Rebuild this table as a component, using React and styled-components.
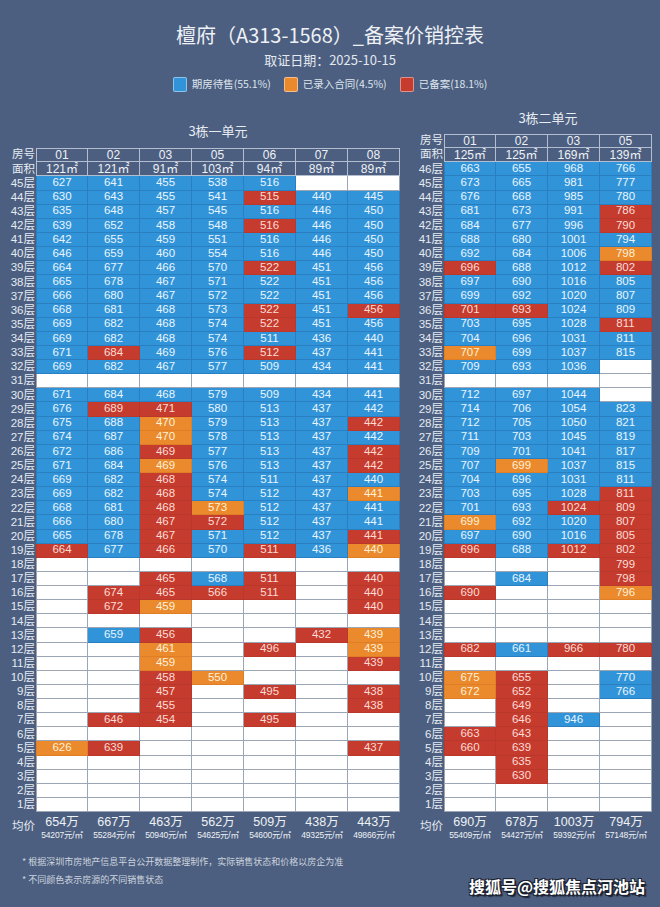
import React from "react";
import styled, { createGlobalStyle } from "styled-components";

const ROW_H = 14.13;
const NUM_FONT = `"Liberation Sans", "Noto Sans CJK SC", sans-serif`;

const COLORS = {
  b: { fill: "#3294d8", line: "#2a7fc0", text: "#e8f4ff" },
  r: { fill: "#c53b2e", line: "#b9372b", text: "#fbdcd5" },
  o: { fill: "#ea8a2d", line: "#de7f27", text: "#fff0d8" },
  e: { fill: "#ffffff", line: "#9ba5b3", text: "#333" },
  h: { fill: "transparent", line: "#b3bfd1", text: "#eef1f6" },
};

const GlobalStyle = createGlobalStyle`
  html, body {
    margin: 0;
    padding: 0;
    background: #4c5f80;
  }
  body {
    font-family: "Noto Sans CJK SC", "Noto Sans", sans-serif;
  }
`;

const Page = styled.div`
  width: 660px;
  height: 907px;
  box-sizing: border-box;
  padding: 22px 8px 0;
  background: #4c5f80;
  color: #e8ecf2;
  overflow: hidden;
`;

const Title = styled.h1`
  margin: 0;
  text-align: center;
  font-size: 20px;
  line-height: 26px;
  font-weight: 400;
  color: #eef1f5;
`;

const DateLine = styled.div`
  margin-top: 3px;
  text-align: center;
  font-size: 13px;
  line-height: 18px;
  color: #e3e8ef;
`;

const Legend = styled.div`
  margin-top: 7px;
  height: 16px;
  display: flex;
  justify-content: center;
  align-items: center;
  gap: 13px;
`;

const LegendItem = styled.div`
  display: flex;
  align-items: center;
  gap: 5px;
  font-size: 10.5px;
  line-height: 16px;
  color: #dfe5ee;
`;

const Swatch = styled.span`
  width: 14px;
  height: 15px;
  box-sizing: border-box;
  border-radius: 2px;
  background: ${(p) => COLORS[p.$status].fill};
  border: 1px solid rgba(255, 255, 255, 0.45);
`;

const Tables = styled.div`
  margin-top: 18px;
  display: flex;
  align-items: flex-end;
  gap: 15px;
`;

const Block = styled.div`
  display: flex;
  flex-direction: column;
`;

const BlockTitle = styled.div`
  padding-left: ${(p) => p.$offset}px;
  margin-bottom: ${(p) => p.$gap}px;
  text-align: center;
  font-size: 13px;
  line-height: 16px;
  color: #e8ecf2;
`;

const Grid = styled.div`
  display: grid;
  grid-template-columns: ${(p) => p.$label}px repeat(${(p) => p.$cols}, 52px);
  grid-template-rows: repeat(${(p) => p.$rows}, ${ROW_H}px) 30px;
  font-family: ${NUM_FONT};
`;

const RowLabel = styled.div`
  display: flex;
  align-items: center;
  justify-content: flex-end;
  padding-right: 1px;
  font-size: 11.5px;
  line-height: 1;
  color: #e6ebf2;
  white-space: nowrap;
`;

const Cell = styled.div`
  box-sizing: border-box;
  display: flex;
  align-items: center;
  justify-content: center;
  background: ${(p) => COLORS[p.$status].fill};
  color: ${(p) => COLORS[p.$status].text};
  border-right: 1px solid ${(p) => COLORS[p.$status].line};
  border-bottom: 1px solid ${(p) => COLORS[p.$status].line};
  border-left: ${(p) => (p.$first ? `1px solid ${COLORS[p.$status].line}` : "none")};
  border-top: ${(p) => (p.$top ? `1px solid ${COLORS[p.$status].line}` : "none")};
  font-size: ${(p) => (p.$status === "h" ? 12 : 11.5)}px;
  line-height: 1;
  white-space: nowrap;
`;

const AvgLabel = styled.div`
  display: flex;
  align-items: center;
  justify-content: flex-end;
  padding-right: 1px;
  font-size: 11.5px;
  line-height: 1;
  color: #e6ebf2;
`;

const AvgCell = styled.div`
  display: flex;
  flex-direction: column;
  align-items: center;
  padding-top: 3px;
  gap: 1px;
  color: #eef1f5;
  white-space: nowrap;
`;

const AvgTotal = styled.span`
  font-size: 12.5px;
  line-height: 14px;
`;

const AvgUnit = styled.span`
  font-size: 8.5px;
  line-height: 10px;
  letter-spacing: -0.2px;
`;

const Footer = styled.div`
  margin-top: 11px;
  padding: 0 7px 0 14px;
  display: flex;
  justify-content: space-between;
  align-items: flex-start;
`;

const Notes = styled.div`
  font-size: 9px;
  line-height: 18px;
  color: #cdd4de;
`;

const Watermark = styled.div`
  margin-top: 23px;
  font-size: 16px;
  line-height: 20px;
  font-weight: 700;
  color: #ffffff;
  text-shadow: 1px 1px 0 #1c2230, -1px -1px 0 #1c2230, 1px -1px 0 #1c2230,
    -1px 1px 0 #1c2230, 2px 2px 1px #1c2230;
`;

const LEFT = {
  name: "3栋一单元",
  rooms: ["01", "02", "03", "05", "06", "07", "08"],
  areas: ["121", "121", "91", "103", "94", "89", "89"],
  top: 45,
  rows: {
    45: "627 641 455 538 516 - -",
    44: "630 643 455 541 515r 440 445",
    43: "635 648 457 545 516 446 450",
    42: "639 652 458 548 516r 446 450",
    41: "642 655 459 551 516 446 450",
    40: "646 659 460 554 516 446 450",
    39: "664 677 466 570 522r 451 456",
    38: "665 678 467 571 522 451 456",
    37: "666 680 467 572 522 451 456",
    36: "668 681 468 573 522r 451 456r",
    35: "669 682 468 574 522r 451 456",
    34: "669 682 468 574 511 436 440",
    33: "671 684r 469 576 512r 437 441",
    32: "669 682 467 577 509 434 441",
    30: "671 684 468 579 509 434 441",
    29: "676 689r 471r 580 513 437 442",
    28: "675 688 470o 579 513 437 442r",
    27: "674 687 470o 578 513 437 442",
    26: "672 686 469r 577 513 437 442r",
    25: "671 684 469o 576 513 437 442r",
    24: "669 682 468r 574 511 437 440",
    23: "669 682 468r 574 512 437 441o",
    22: "668 681 468r 573o 512 437 441",
    21: "666 680 467r 572r 512 437 441",
    20: "665 678 467r 571 512 437 441r",
    19: "664r 677 466r 570 511r 436 440o",
    17: "- - 465r 568 511r - 440r",
    16: "- 674r 465r 566r 511r - 440r",
    15: "- 672r 459o - - - 440r",
    13: "- 659 456r - - 432r 439o",
    12: "- - 461o - 496r - 439o",
    11: "- - 459o - - - 439r",
    10: "- - 458r 550o - - -",
    9: "- - 457r - 495r - 438r",
    8: "- - 455r - - - 438r",
    7: "- 646r 454r - 495r - -",
    5: "626o 639r - - - - 437r",
  },
  avg: [
    ["654", "54207"],
    ["667", "55284"],
    ["463", "50940"],
    ["562", "54625"],
    ["509", "54600"],
    ["438", "49325"],
    ["443", "49866"],
  ],
};

const RIGHT = {
  name: "3栋二单元",
  rooms: ["01", "02", "03", "05"],
  areas: ["125", "125", "169", "139"],
  top: 46,
  rows: {
    46: "663 655 968 766",
    45: "673 665 981 777",
    44: "676 668 985 780",
    43: "681 673 991 786r",
    42: "684 677 996 790r",
    41: "688 680 1001 794",
    40: "692 684 1006 798o",
    39: "696r 688 1012 802r",
    38: "697 690 1016 805",
    37: "699 692 1020 807",
    36: "701r 693r 1024 809",
    35: "703 695 1028 811r",
    34: "704 696 1031 811",
    33: "707o 699 1037 815",
    32: "709 693 1036 -",
    30: "712 697 1044 -",
    29: "714 706 1054 823",
    28: "712 705 1050 821",
    27: "711 703 1045 819",
    26: "709 701 1041 817",
    25: "707 699o 1037 815",
    24: "704 696 1031 811",
    23: "703 695 1028 811r",
    22: "701 693 1024r 809r",
    21: "699o 692 1020 807r",
    20: "697 690 1016 805r",
    19: "696r 688 1012r 802r",
    18: "- - - 799r",
    17: "- 684 - 798r",
    16: "690r - - 796o",
    12: "682r 661 966r 780r",
    10: "675o 655r - 770",
    9: "672o 652r - 766",
    8: "- 649r - -",
    7: "- 646r 946 -",
    6: "663r 643r - -",
    5: "660r 639r - -",
    4: "- 635r - -",
    3: "- 630r - -",
  },
  avg: [
    ["690", "55409"],
    ["678", "54427"],
    ["1003", "59392"],
    ["794", "57148"],
  ],
};

// "512r" -> red, "470o" -> orange, "-" -> empty, plain number -> blue
const parseCell = (token) => {
  if (!token || token === "-") return { value: "", status: "e" };
  const last = token.slice(-1);
  if (last === "r" || last === "o") return { value: token.slice(0, -1), status: last };
  return { value: token, status: "b" };
};

const UnitTable = ({ data, label, titleGap }) => {
  const cols = data.rooms.length;
  const floors = [];
  for (let f = data.top; f >= 1; f--) floors.push(f);

  return (
    <Block>
      <BlockTitle $offset={label} $gap={titleGap}>
        {data.name}
      </BlockTitle>
      <Grid $label={label} $cols={cols} $rows={floors.length + 2}>
        <RowLabel>房号</RowLabel>
        {data.rooms.map((r, i) => (
          <Cell key={`r${i}`} $status="h" $top $first={i === 0}>
            {r}
          </Cell>
        ))}
        <RowLabel>面积</RowLabel>
        {data.areas.map((a, i) => (
          <Cell key={`a${i}`} $status="h" $first={i === 0}>
            {a}㎡
          </Cell>
        ))}
        {floors.map((f) => {
          const tokens = (data.rows[f] || "").split(" ");
          return (
            <React.Fragment key={f}>
              <RowLabel>{f}层</RowLabel>
              {data.rooms.map((_, i) => {
                const c = parseCell(tokens[i]);
                return (
                  <Cell key={i} $status={c.status} $first={i === 0}>
                    {c.value}
                  </Cell>
                );
              })}
            </React.Fragment>
          );
        })}
        <AvgLabel>均价</AvgLabel>
        {data.avg.map(([total, unit], i) => (
          <AvgCell key={`v${i}`}>
            <AvgTotal>{total}万</AvgTotal>
            <AvgUnit>{unit}元/㎡</AvgUnit>
          </AvgCell>
        ))}
      </Grid>
    </Block>
  );
};

const App = () => {
  return (
    <Page>
      <GlobalStyle />
      <Title>檀府（A313-1568）_备案价销控表</Title>
      <DateLine>取证日期：2025-10-15</DateLine>
      <Legend>
        <LegendItem>
          <Swatch $status="b" />
          期房待售(55.1%)
        </LegendItem>
        <LegendItem>
          <Swatch $status="o" />
          已录入合同(4.5%)
        </LegendItem>
        <LegendItem>
          <Swatch $status="r" />
          已备案(18.1%)
        </LegendItem>
      </Legend>
      <Tables>
        <UnitTable data={LEFT} label={28} titleGap={9} />
        <UnitTable data={RIGHT} label={29} titleGap={8} />
      </Tables>
      <Footer>
        <Notes>
          <div>* 根据深圳市房地产信息平台公开数据整理制作，实际销售状态和价格以房企为准</div>
          <div>* 不同颜色表示房源的不同销售状态</div>
        </Notes>
        <Watermark>搜狐号@搜狐焦点河池站</Watermark>
      </Footer>
    </Page>
  );
};

export default App;
